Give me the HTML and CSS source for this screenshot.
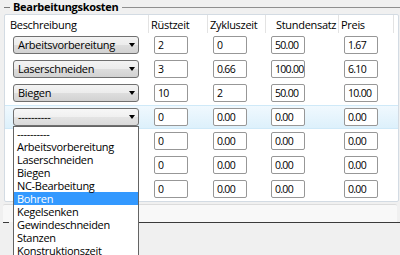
FILE: index.html
```html
<!DOCTYPE html>
<html lang="de">
<head>
  <meta charset="UTF-8">
  <title>Bearbeitungskosten</title>
  <link rel="stylesheet" href="styles.css">
</head>
<body>
  <div class="group-title">
    <span class="dash"></span>
    <span class="title">Bearbeitungskosten</span>
    <span class="rule"></span>
  </div>

  <div class="grid">
    <div class="row head">
      <div class="cell">Beschreibung</div>
      <div class="cell">Rüstzeit</div>
      <div class="cell">Zykluszeit</div>
      <div class="cell wide">Stundensatz</div>
      <div class="cell">Preis</div>
      <div class="cell last"></div>
    </div>

    <div class="row">
      <div class="cell"><div class="combo">Arbeitsvorbereitung</div></div>
      <div class="cell"><div class="box">2</div></div>
      <div class="cell"><div class="box">0</div></div>
      <div class="cell"><div class="box">50.00</div></div>
      <div class="cell"><div class="box">1.67</div></div>
    </div>
    <div class="row">
      <div class="cell"><div class="combo">Laserschneiden</div></div>
      <div class="cell"><div class="box">3</div></div>
      <div class="cell"><div class="box">0.66</div></div>
      <div class="cell"><div class="box">100.00</div></div>
      <div class="cell"><div class="box">6.10</div></div>
    </div>
    <div class="row">
      <div class="cell"><div class="combo">Biegen</div></div>
      <div class="cell"><div class="box">10</div></div>
      <div class="cell"><div class="box">2</div></div>
      <div class="cell"><div class="box">50.00</div></div>
      <div class="cell"><div class="box">10.00</div></div>
    </div>
    <div class="row selected">
      <div class="cell"><div class="combo open">----------</div></div>
      <div class="cell"><div class="box">0</div></div>
      <div class="cell"><div class="box">0.00</div></div>
      <div class="cell"><div class="box">0.00</div></div>
      <div class="cell"><div class="box">0.00</div></div>
    </div>
    <div class="row">
      <div class="cell"></div>
      <div class="cell"><div class="box">0</div></div>
      <div class="cell"><div class="box">0.00</div></div>
      <div class="cell"><div class="box">0.00</div></div>
      <div class="cell"><div class="box">0.00</div></div>
    </div>
    <div class="row">
      <div class="cell"></div>
      <div class="cell"><div class="box">0</div></div>
      <div class="cell"><div class="box">0.00</div></div>
      <div class="cell"><div class="box">0.00</div></div>
      <div class="cell"><div class="box">0.00</div></div>
    </div>
    <div class="row">
      <div class="cell"></div>
      <div class="cell"><div class="box">0</div></div>
      <div class="cell"><div class="box">0.00</div></div>
      <div class="cell"><div class="box">0.00</div></div>
      <div class="cell"><div class="box">0.00</div></div>
    </div>
  </div>

  <div class="strip"></div>

  <div class="group-title dark">
    <span class="dash"></span>
    <span class="title"></span>
    <span class="rule"></span>
  </div>

  <ul class="droplist">
    <li>----------</li>
    <li>Arbeitsvorbereitung</li>
    <li>Laserschneiden</li>
    <li>Biegen</li>
    <li>NC-Bearbeitung</li>
    <li class="active">Bohren</li>
    <li>Kegelsenken</li>
    <li>Gewindeschneiden</li>
    <li>Stanzen</li>
    <li>Konstruktionszeit</li>
  </ul>
</body>
</html>
```

FILE: styles.css
```css
body {
  margin: 0;
  background-color: #f0f0f0;
  font-family: "Open Sans", sans-serif;
  font-size: 11px;
  letter-spacing: -0.3px;
  color: #000;
  position: relative;
  height: 255px;
  overflow: hidden;
}

.group-title {
  display: flex;
  align-items: center;
  height: 14px;
}

.group-title .dash {
  width: 6px;
  margin-left: 4px;
  border-top: 1px solid #7a7a7a;
}

.group-title .title {
  font-weight: bold;
  padding: 0 4px 0 3px;
  line-height: 14px;
  margin-top: -1px;
}

.group-title .rule {
  flex: 1;
  border-top: 1px solid #8f8f8f;
}

.group-title.dark {
  height: 3px;
  align-items: flex-start;
}

.group-title.dark .dash,
.group-title.dark .rule {
  border-top-color: #3a3a3a;
}

.group-title.dark .dash {
  margin-left: 3px;
}

.group-title.dark .title {
  width: 80px;
}

.grid {
  margin-left: 4px;
  width: 393px;
  background-color: #fff;
  border: 1px solid #d3dbe3;
  border-radius: 2px;
}

.row {
  display: grid;
  grid-template-columns: 144px 59px 58px 73px 55px 1fr;
  height: 24px;
}

.row .cell {
  padding: 3px 0 0 5px;
}

.row .cell:first-child {
  padding-left: 8px;
}

.row.head {
  height: 18px;
}

.row.head .cell {
  padding: 2px 0 0 2px;
  line-height: 16px;
  border-right: 1px solid #e3e3e3;
}

.row.head .cell:first-child {
  padding-left: 5px;
}

.row.head .cell.wide {
  padding-left: 10px;
}

.row.head .cell.last {
  border-right: none;
}

.row.selected {
  background: linear-gradient(#f1f9fe, #dcf0fb);
  box-shadow: inset 0 1px 0 #cfe9f8, inset 0 -1px 0 #cfe9f8;
}

.combo {
  position: relative;
  box-sizing: border-box;
  width: 126px;
  height: 18px;
  line-height: 16px;
  padding-left: 4px;
  border: 1px solid #707070;
  border-radius: 3px;
  background: linear-gradient(#f3f3f3, #ececec 50%, #dedede 50%, #d2d2d2);
}

.combo.open {
  background: linear-gradient(#f7f7f7, #f0f0f0 50%, #e4e4e4 50%, #dadada);
}

.combo::after {
  content: "";
  position: absolute;
  right: 3px;
  top: 6px;
  border-left: 3.5px solid transparent;
  border-right: 3.5px solid transparent;
  border-top: 4px solid #000;
}

.box {
  box-sizing: border-box;
  width: 34px;
  height: 18px;
  line-height: 16px;
  padding-left: 3px;
  font-size: 10.5px;
  letter-spacing: -0.7px;
  white-space: nowrap;
  overflow: hidden;
  background-color: #fff;
  border: 1px solid #979797;
  border-radius: 2px;
}

.strip {
  margin: 2px 3px 0 3px;
  height: 17px;
  background-color: #f8f8f8;
  border-top: 1px solid #dcdcdc;
  border-radius: 2px 2px 0 0;
}

.droplist {
  position: absolute;
  left: 13px;
  top: 126px;
  width: 126px;
  box-sizing: border-box;
  margin: 0;
  padding: 0;
  list-style: none;
  background-color: #fff;
  border: 1px solid #646464;
}

.droplist li {
  height: 13px;
  line-height: 13px;
  padding-left: 3px;
}

.droplist li.active {
  background-color: #3399ff;
  color: #fff;
}
```
